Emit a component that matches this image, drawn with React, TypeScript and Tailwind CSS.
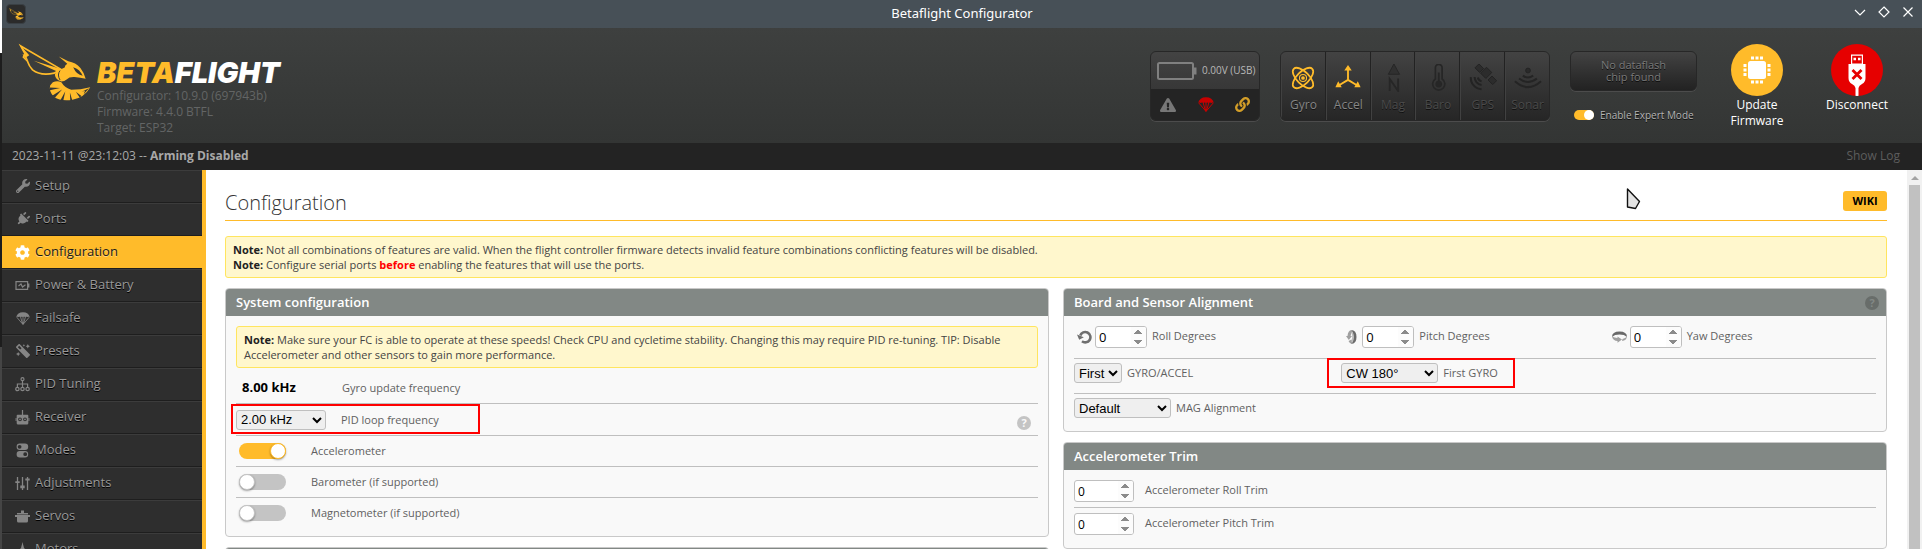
import React from "react";
import { FaWrench, FaPlug, FaCog, FaMagic, FaExclamationTriangle, FaLink } from "react-icons/fa";

const UI_FONT = "font-['Open_Sans','Noto_Sans',sans-serif]";

function Wasp({ className }: { className?: string }) {
  return (
    <svg viewBox="50 125 222 180" className={className} aria-hidden="true">
      <path
        d="M58 134 L182 206 L168 212 L160 217 Q118 226 94 207 Q84 197 78 180 L66 168 L71 158 Z"
        fill="none"
        stroke="#ffbb2a"
        strokeWidth="5"
        strokeLinejoin="miter"
      />
      <path d="M98 179 L184 205 L174 214 Z" fill="#ffbb2a" />
      <path d="M53 128 L72 160 L63 160 L82 182 L76 168 L84 162 Z" fill="#ffbb2a" />
      <path
        d="M174 166 L203 181 Q226 185 240 201 Q252 216 256 234 Q240 231 222 229 Q206 228 198 236 Q190 243 180 242 Q164 236 162 222 Q164 210 176 207 L192 200 Q192 192 200 188 Z"
        fill="#ffbb2a"
      />
      <path d="M218 199 Q238 205 247 225 Q228 222 218 199 Z" fill="#353736" />
      <path d="M178 209 Q168 222 178 238" fill="none" stroke="#3a3c3b" strokeWidth="3" />
      <path
        d="M156 245 Q170 238 182 245 Q192 262 212 268 Q240 268 270 260 Q252 292 216 298 Q182 304 160 290 Q142 272 148 254 Z"
        fill="#ffbb2a"
      />
      <g fill="#353736">
        <path d="M146 261 L178 262 L147 269Z" />
        <path d="M154 286 L184 267 L162 292Z" />
        <path d="M179 300 L194 272 L188 300Z" />
        <path d="M209 300 L208 276 L215 299Z" />
        <path d="M238 291 L226 274 L243 287Z" />
        <path d="M244 274 L266 263 L250 281 L254 271Z" />
      </g>
    </svg>
  );
}

function Parachute({ className }: { className?: string }) {
  return (
    <svg viewBox="0 0 16 15" className={className} fill="currentColor" aria-hidden="true">
      <path d="M0.2 5.8 Q1.5 0.2 8 0.2 Q14.5 0.2 15.8 5.8 Q14.6 5 13.3 5.9 Q12 5 10.6 5.9 Q9.4 5 8 5.9 Q6.6 5 5.4 5.9 Q4 5 2.7 5.9 Q1.4 5 0.2 5.8Z" />
      <path
        d="M0.8 6 L7.2 13.5 M5.2 5.8 L7.4 13.5 M10.8 5.8 L8.6 13.5 M15.2 6 L8.8 13.5 M8 5.8 V13.5"
        stroke="currentColor"
        strokeWidth="1"
        fill="none"
      />
      <path d="M6.3 12 H9.7 L8.6 14.8 H7.4 Z" />
    </svg>
  );
}

const S = { viewBox: "0 0 15 15", className: "size-[15px]", fill: "currentColor", "aria-hidden": true } as const;

const BatteryIcon = () => (
  <svg {...S}>
    <path d="M1 3.7 H12.6 V11.3 H1 Z" fill="none" stroke="currentColor" strokeWidth="1.2" />
    <rect x="13" y="5.5" width="1.4" height="4" />
    <path d="M3.5 8 L6 6 L7.5 9 L10.5 6.8" fill="none" stroke="currentColor" strokeWidth="1.2" />
  </svg>
);
const PidIcon = () => (
  <svg {...S}>
    <g fill="none" stroke="currentColor" strokeWidth="1.2">
      <circle cx="7.5" cy="2.2" r="1.5" />
      <path d="M7.5 3.8 V10 M2.4 10 V7 H12.6 V10" />
      <circle cx="2.4" cy="12" r="1.7" />
      <circle cx="7.5" cy="12" r="1.7" />
      <circle cx="12.6" cy="12" r="1.7" />
    </g>
  </svg>
);
const ReceiverIcon = () => (
  <svg {...S}>
    <rect x="6.9" y="0" width="1.2" height="6" />
    <path
      fillRule="evenodd"
      d="M2.5 4.8 H12.5 Q13.3 4.8 13.3 5.8 V13.2 Q13.3 14.4 12 14.4 H3 Q1.7 14.4 1.7 13.2 V5.8 Q1.7 4.8 2.5 4.8Z M5 7.4 A1.9 1.9 0 1 0 5 11.2 A1.9 1.9 0 1 0 5 7.4Z M10 7.4 A1.9 1.9 0 1 0 10 11.2 A1.9 1.9 0 1 0 10 7.4Z"
    />
    <circle cx="5" cy="9.3" r="0.9" />
    <circle cx="10" cy="9.3" r="0.9" />
    <rect x="0.6" y="8" width="0.9" height="3" />
    <rect x="13.5" y="8" width="0.9" height="3" />
  </svg>
);
const ModesIcon = () => (
  <svg {...S}>
    <path
      fillRule="evenodd"
      d="M4.8 0.6 H10 A3.2 3.2 0 0 1 10 7 H4.8 A3.2 3.2 0 0 1 4.8 0.6Z M4.6 1.9 A1.9 1.9 0 1 0 4.6 5.7 A1.9 1.9 0 1 0 4.6 1.9Z"
    />
    <path
      fillRule="evenodd"
      d="M4.8 8 H10 A3.2 3.2 0 0 1 10 14.4 H4.8 A3.2 3.2 0 0 1 4.8 8Z M10.2 9.3 A1.9 1.9 0 1 0 10.2 13.1 A1.9 1.9 0 1 0 10.2 9.3Z"
    />
  </svg>
);
const AdjustIcon = () => (
  <svg {...S}>
    <path d="M2.5 1 V14 M7.5 1 V14 M12.5 1 V14" stroke="currentColor" strokeWidth="1.3" />
    <path d="M0.3 5.2 H4.7 V7 H0.3Z M5.3 9.4 H9.7 V12.2 H5.3Z M10.3 2.4 H14.7 V4.4 H10.3Z" />
  </svg>
);
const ServoIcon = () => (
  <svg {...S}>
    <path d="M6 1.5 H9 V4 H6Z M2 4 H13 V5.4 H2Z M0 6 H15 V8 H13 V12 Q13 13.5 11.5 13.5 H3.5 Q2 13.5 2 12 V8 H0Z" />
  </svg>
);
const MotorIcon = () => (
  <svg {...S}>
    <path d="M7.5 0 L9 6 L15 12 L8 9.6 L0 12 L6 6Z" />
  </svg>
);

const NAV: { label: string; icon: React.ReactNode; active?: boolean }[] = [
  { label: "Setup", icon: <FaWrench className="size-[14px]" /> },
  { label: "Ports", icon: <FaPlug className="size-[14px] rotate-45" /> },
  { label: "Configuration", icon: <FaCog className="size-[15px]" />, active: true },
  { label: "Power & Battery", icon: <BatteryIcon /> },
  { label: "Failsafe", icon: <Parachute className="h-[13px] w-[14px]" /> },
  { label: "Presets", icon: <FaMagic className="size-[14px] -scale-x-100" /> },
  { label: "PID Tuning", icon: <PidIcon /> },
  { label: "Receiver", icon: <ReceiverIcon /> },
  { label: "Modes", icon: <ModesIcon /> },
  { label: "Adjustments", icon: <AdjustIcon /> },
  { label: "Servos", icon: <ServoIcon /> },
  { label: "Motors", icon: <MotorIcon /> },
];

function TitleBar() {
  return (
    <div className="grid h-7 shrink-0 grid-cols-[1fr_auto_1fr] items-center bg-[#475057] text-white">
      <span className="ml-1 flex h-5 w-5 items-center justify-center rounded-sm border border-[#3a4045] bg-[#2b2b2b]">
        <Wasp className="h-3 w-[15px]" />
      </span>
      <span className="font-['Noto_Sans',sans-serif] text-[13px] leading-[26px] self-start">Betaflight Configurator</span>
      <div className="flex items-center justify-end gap-1 pr-1 pb-1">
        <button aria-label="Minimize" className="flex size-5 items-center justify-center">
          <svg viewBox="0 0 12 12" className="size-3" fill="none" stroke="#fff" strokeWidth="1.2">
            <path d="M1 4 L6 9 L11 4" />
          </svg>
        </button>
        <button aria-label="Maximize" className="flex size-5 items-center justify-center">
          <svg viewBox="0 0 12 12" className="size-3" fill="none" stroke="#fff" strokeWidth="1.2">
            <path d="M6 1 L11 6 L6 11 L1 6Z" />
          </svg>
        </button>
        <button aria-label="Close" className="flex size-5 items-center justify-center">
          <svg viewBox="0 0 12 12" className="size-3" fill="none" stroke="#fff" strokeWidth="1.2">
            <path d="M1.5 1.5 L10.5 10.5 M10.5 1.5 L1.5 10.5" />
          </svg>
        </button>
      </div>
    </div>
  );
}

const SENSORS: { label: string; on: boolean; icon: React.ReactNode }[] = [
  {
    label: "Gyro",
    on: true,
    icon: (
      <g fill="none" stroke="#ffbb2a" strokeWidth="1.9">
        <ellipse cx="15" cy="15" rx="14" ry="6.6" transform="rotate(45 15 15)" />
        <ellipse cx="15" cy="15" rx="14" ry="6.6" transform="rotate(-45 15 15)" />
        <circle cx="15" cy="15" r="3.8" strokeWidth="1.2" />
        <circle cx="15" cy="15" r="2" fill="#ffbb2a" stroke="none" />
      </g>
    ),
  },
  {
    label: "Accel",
    on: true,
    icon: (
      <g stroke="#ffbb2a" strokeWidth="2" fill="#ffbb2a">
        <path d="M15 5 V18 M15 17 L5 23 M15 17 L25 23" fill="none" />
        <path d="M15 1 L19 7 H11Z M1.5 25 L4.5 18.5 L8.3 25Z M28.5 25 L25.5 18.5 L21.7 25Z" stroke="none" />
      </g>
    ),
  },
  {
    label: "Mag",
    on: false,
    icon: (
      <g fill="none" stroke="#262626" strokeWidth="1.6">
        <path d="M16 0 L22 11 H10Z" fill="#303030" strokeWidth="1" />
        <path d="M11.5 29 V16 L20.5 29 V15.5" strokeWidth="2" />
      </g>
    ),
  },
  {
    label: "Baro",
    on: false,
    icon: (
      <g fill="none" stroke="#262626">
        <path d="M12.2 16 V4 A3.6 3.6 0 0 1 19.4 4 V16 A6.5 6.5 0 1 1 12.2 16Z" strokeWidth="1.8" />
        <path d="M15.8 9 V20" strokeWidth="2" />
        <circle cx="15.8" cy="21.5" r="3.6" fill="#262626" stroke="none" />
      </g>
    ),
  },
  {
    label: "GPS",
    on: false,
    icon: (
      <g fill="#2c2c2c" stroke="#232323" strokeWidth="1">
        <rect x="14.4" y="5" width="8" height="9" transform="rotate(45 18.4 9.5)" />
        <rect x="8" y="1" width="6" height="7" transform="rotate(-45 11 4.5)" />
        <rect x="22" y="14" width="6" height="7" transform="rotate(-45 25 17.5)" />
        <path
          d="M2 14 A12 12 0 0 0 13.5 27 M6 14 A8.500 8.500 0 0 0 13.500 22.500 M9.5 14.500 A5 5 0 0 0 13.500 18.500"
          fill="none"
          strokeWidth="2.2"
        />
      </g>
    ),
  },
  {
    label: "Sonar",
    on: false,
    icon: (
      <g fill="none" stroke="#242424" strokeWidth="2.2">
        <circle cx="15" cy="7" r="2.6" fill="#2a2a2a" strokeWidth="1" />
        <path d="M9.5 12.500 Q15 16.500 20.5 12.500 M5.5 15.500 Q15 23 24.5 15.500 M1 18.500 Q15 31 29 18.500" />
      </g>
    ),
  },
];

function TopHeader() {
  return (
    <header className="flex h-[115px] shrink-0 items-start bg-linear-to-b from-[#3e403f] to-[#333534]">
      <div className="flex flex-1 pt-[15px] pl-4">
        <Wasp className="h-[59px] w-[73px]" />
        <div className="pt-[15px] pl-[6px]">
          <div className="font-['Inter',sans-serif] text-[29px] leading-[30px] font-black text-white italic">
            <span className="text-[#ffbb2a]">BETA</span>FLIGHT
          </div>
          <div className="text-xs leading-4 text-[#636565]">
            <p>Configurator: 10.9.0 (697943b)</p>
            <p>Firmware: 4.4.0 BTFL</p>
            <p>Target: ESP32</p>
          </div>
        </div>
      </div>

      <div className="mt-[23px] flex h-[70px] w-[110px] flex-col overflow-hidden rounded-md border border-[#272727] bg-linear-to-b from-[#434343] to-[#2e2e2e] shadow-[0_1px_0_#4c4c4c]">
        <div className="flex h-[37px] items-center gap-[5px] pl-[6px]">
          <svg viewBox="0 0 40 18" className="h-[18px] w-10 shrink-0" aria-hidden="true">
            <rect x="1" y="1" width="35" height="16" rx="1.5" fill="none" stroke="#808080" strokeWidth="2" />
            <rect x="36.5" y="5.5" width="3" height="7" fill="#808080" />
          </svg>
          <span className="text-[10px] whitespace-nowrap text-[#b8b8b8]">0.00V (USB)</span>
        </div>
        <div className="flex flex-1 items-center justify-between bg-[#242424] px-[9px]">
          <FaExclamationTriangle className="size-4 text-[#777]" />
          <Parachute className="h-[15px] w-4 text-[#c80000]" />
          <FaLink className="size-[15px] text-[#d39e28]" />
        </div>
      </div>

      <ul className="mt-[23px] ml-5 flex h-[70px] w-[270px] overflow-hidden rounded-md border border-[#272727] bg-linear-to-b from-[#434343] to-[#262626] shadow-[0_1px_0_#4c4c4c]">
        {SENSORS.map((s) => (
          <li
            key={s.label}
            className="flex w-0 flex-1 flex-col items-center border-r border-l border-r-[#222] border-l-[#414141] pt-3 last:border-r-0"
          >
            <svg viewBox="0 0 30 30" className="size-7" aria-hidden="true">
              {s.icon}
            </svg>
            <span
              className={
                s.on
                  ? "mt-[5px] text-xs leading-4 text-[#868686] [text-shadow:0_1px_rgba(0,0,0,0.6)]"
                  : "mt-[5px] text-xs leading-4 text-[#4a4a4a] [text-shadow:0_1px_rgba(0,0,0,0.6)]"
              }
            >
              {s.label}
            </span>
          </li>
        ))}
      </ul>

      <div className="mt-[23px] ml-5 flex w-[127px] flex-col">
        <div className="flex h-10 flex-col items-center justify-center rounded-md border border-[#272727] bg-linear-to-b from-[#434343] to-[#222] text-center text-[11px] leading-3 text-[#7a7a7a] shadow-[0_1px_0_#4c4c4c] [text-shadow:0_1px_rgba(0,0,0,0.8)]">
          <span>No dataflash</span>
          <span>chip found</span>
        </div>
        <label className="mt-4 flex items-center gap-[6px] pl-1 text-[10px] leading-4 whitespace-nowrap text-[#b4b4b4] [text-shadow:0_1px_rgba(0,0,0,0.8)]">
          <input
            type="checkbox"
            defaultChecked
            className="flex h-[10px] w-5 shrink-0 appearance-none rounded-full bg-[#c4c4c4] before:block before:size-[10px] before:rounded-full before:bg-white checked:bg-[#ffbb2a] checked:before:ml-auto"
          />
          Enable Expert Mode
        </label>
      </div>

      <button className="mt-4 ml-[10px] flex w-[100px] flex-col items-center text-xs leading-4 text-white">
        <span className="flex size-[52px] items-center justify-center rounded-full bg-[#ffbb2a]">
          <svg viewBox="0 0 28 28" className="size-7" fill="#fff" aria-hidden="true">
            <rect x="5" y="5" width="18" height="18" rx="2.5" />
            <path d="M8 0.5h3v3H8z M12.5 0.5h3v3h-3z M17 0.5h3v3h-3z M8 24.5h3v3H8z M12.5 24.5h3v3h-3z M17 24.5h3v3h-3z M0.5 8v3h3V8z M0.5 12.5v3h3v-3z M0.5 17v3h3v-3z M24.5 8v3h3V8z M24.5 12.5v3h3v-3z M24.5 17v3h3v-3z" />
          </svg>
        </span>
        <span className="mt-px">Update</span>
        <span>Firmware</span>
      </button>
      <button className="mt-4 mr-[15px] flex w-[100px] flex-col items-center text-xs leading-4 text-white">
        <span className="flex size-[52px] items-end justify-center overflow-hidden rounded-full bg-[#e60000]">
          <svg viewBox="0 0 20 42" className="h-[42px] w-5" aria-hidden="true">
            <path
              fill="#fff"
              fillRule="evenodd"
              d="M4 0.5 H16 V10 H18.5 V24 Q18.5 28 15 30 Q12 31.5 11.5 34 V42 H8.5 V34 Q8 31.5 5 30 Q1.5 28 1.5 24 V10 H4Z M5.2 1.8 V9.5 H14.8 V1.8Z"
            />
            <path fill="#fff" d="M6.5 3.8h2.5v2.5H6.5z M11 3.8h2.5v2.5H11z" />
            <path d="M5.5 16 L14.5 25 M14.5 16 L5.5 25" stroke="#e60000" strokeWidth="2.8" />
          </svg>
        </span>
        <span className="mt-px">Disconnect</span>
      </button>
    </header>
  );
}

function HelpIcon({ className }: { className: string }) {
  return (
    <button
      aria-label="Help"
      className={`flex size-[14px] items-center justify-center rounded-full text-[11px] leading-[14px] font-bold ${className}`}
    >
      ?
    </button>
  );
}

function Panel({ title, help, children }: { title: string; help?: boolean; children: React.ReactNode }) {
  return (
    <section className="overflow-hidden rounded-[4px] border border-[#c9c9c9] bg-[#f9f9f9]">
      <header className="flex h-[27px] items-center justify-between bg-[#828885] pr-[7px] pl-[10px]">
        <h2 className="text-[13px] font-semibold text-white">{title}</h2>
        {help && <HelpIcon className="bg-[#686d6a] text-[#828885]" />}
      </header>
      {children}
    </section>
  );
}

function Note({ children }: { children: React.ReactNode }) {
  return (
    <div className="rounded-[3px] border border-[#ffe55f] bg-[#fff7cd] px-[7px] py-[5px] text-[11px] leading-[15px] text-[#444]">
      {children}
    </div>
  );
}

const SELECT =
  "h-5 rounded-[3px] border border-[#bfbfbf] bg-[#efefef] font-['Liberation_Sans',sans-serif] text-[13px] text-black";

function NumberField({ id, wide }: { id: string; wide?: boolean }) {
  return (
    <input
      id={id}
      type="number"
      defaultValue={0}
      className={`${wide ? "w-[60px] text-[12px]" : "w-[52px] text-[13px]"} h-[22px] rounded-[3px] border border-[#bfbfbf] bg-white pl-[3px] text-black [&::-webkit-inner-spin-button]:h-5 [&::-webkit-inner-spin-button]:opacity-100`}
    />
  );
}

const FIELD_LABEL = "text-[11px] leading-5 text-[#616161]";

function AxisField({ id, label, icon }: { id: string; label: string; icon: React.ReactNode }) {
  return (
    <div className="flex items-start">
      <span className="flex h-[22px] w-[21px] shrink-0 items-center justify-end pr-[3px]">{icon}</span>
      <NumberField id={id} />
      <label htmlFor={id} className={`${FIELD_LABEL} pl-[5px]`}>
        {label}
      </label>
    </div>
  );
}

function SensorToggle({ label, on, last }: { label: string; on?: boolean; last?: boolean }) {
  return (
    <label
      className={`flex items-center gap-[25px] pl-[3px] text-[11px] text-[#616161] ${last ? "h-[30px]" : "h-[31px] border-b border-[#bfbfbf]"}`}
    >
      <input
        type="checkbox"
        defaultChecked={on}
        className="flex h-4 w-[47px] appearance-none rounded-full bg-[#c4c4c4] before:block before:size-4 before:rounded-full before:border before:border-[#c4c4c4] before:bg-white before:shadow-[0_1px_2px_rgba(0,0,0,0.35)] checked:bg-[#ffbb2a] checked:before:ml-auto checked:before:border-[#ffbb2a]"
      />
      {label}
    </label>
  );
}

const RollIcon = () => (
  <svg viewBox="0 0 15 14" className="h-[14px] w-[15px] shrink-0" fill="none" aria-hidden="true">
    <path d="M3.3 5.5 A5.2 5.2 0 1 1 5 11.300" stroke="#6f6f6f" strokeWidth="2.6" />
    <path d="M0 4.500 L6.8 7.2 L2.2 9.800Z" fill="#6f6f6f" />
  </svg>
);
const PitchIcon = () => (
  <svg viewBox="0 0 15 14" className="h-[14px] w-[15px] shrink-0" aria-hidden="true">
    <path d="M7 0 Q12.5 0 12.500 7 Q12.5 14 7 14 Q9.6 11.500 9.600 7 Q9.6 2.500 7 0Z" fill="#6a6a6a" />
    <path d="M7.500 0 Q4 0.500 3.500 6 L2 6 L4.800 10 L8 6 L6.600 6 Q6.800 3 8.500 1.500Z M4.500 11 L7.500 9.500 L9 13.800 Q6 14.500 4.500 11Z" fill="#a0a0a0" />
    <path d="M8 2 Q10 7 8 12" stroke="#bdbdbd" strokeWidth="1.600" fill="none" />
  </svg>
);
const YawIcon = () => (
  <svg viewBox="0 0 15 14" className="h-[14px] w-[15px] shrink-0" aria-hidden="true">
    <path d="M0 7 Q0 1.500 7.500 1.500 Q15 1.500 15 7 Q12.500 4.600 7.500 4.600 Q2.500 4.600 0 7Z" fill="#6a6a6a" />
    <path d="M0 6.500 Q1 10.800 5.500 11 L5.500 12.800 L10 9.600 L5.500 6.600 L5.500 8 Q2.500 7.800 0 6.500Z M10.500 9 Q13.500 8 15 6.500 Q14.500 10.500 10 11Z" fill="#a0a0a0" />
  </svg>
);

export default function App() {
  return (
    <div className={`flex h-screen overflow-hidden bg-white ${UI_FONT}`}>
      <div className="flex w-[2px] shrink-0 flex-col">
        <div className="h-[53px] bg-white" />
        <div className="h-[294px] bg-[#1d1d1d]" />
        <div className="flex-1 bg-[#454545]" />
      </div>
      <div className="flex min-w-0 flex-1 flex-col">
        <TitleBar />
        <TopHeader />
        <div className="flex h-[27px] shrink-0 items-center justify-between bg-[#232323] pr-[22px] pl-[10px] text-xs text-[#a8a8a8]">
          <p className="-mt-px">
            2023-11-11 @23:12:03 -- <strong className="font-bold">Arming Disabled</strong>
          </p>
          <button className="-mt-px text-[#5d5d5d]">Show Log</button>
        </div>

        <div className="flex min-h-0 flex-1">
          <nav className="w-[204px] shrink-0 overflow-hidden border-r-4 border-[#ffbb2a] bg-[#2e2e2e]">
            <ul>
              {NAV.map((n) => (
                <li key={n.label}>
                  <a
                    href="#"
                    aria-current={n.active ? "page" : undefined}
                    className={
                      n.active
                        ? "flex h-[33px] items-center gap-[5px] border-b border-[#1e1e1e] bg-[#ffbb2a] pl-[13px] text-[13px] text-[#1a1a1a] [text-shadow:0_1px_rgba(255,255,255,0.4)]"
                        : "flex h-[33px] items-center gap-[5px] border-b border-[#1e1e1e] pl-[13px] text-[13px] text-[#999] shadow-[inset_0_1px_0_#3c3c3c] [text-shadow:0_1px_rgba(0,0,0,1)]"
                    }
                  >
                    <span
                      className={
                        n.active
                          ? "flex w-[15px] justify-center text-white"
                          : "flex w-[15px] justify-center text-[#858585]"
                      }
                    >
                      {n.icon}
                    </span>
                    {n.label}
                  </a>
                </li>
              ))}
            </ul>
          </nav>

          <main className="min-w-0 flex-1 overflow-hidden pt-5 pr-5 pl-[19px]">
            <div className="mb-[15px] flex h-[31px] items-start justify-between border-b border-[#ffbb2a]">
              <h1 className="text-[20px] leading-[25px] font-light text-[#333]">Configuration</h1>
              <a
                href="#"
                className="mt-px flex h-5 w-11 items-center justify-center rounded-[3px] bg-[#ffbb2a] text-[11px] font-bold text-black"
              >
                WIKI
              </a>
            </div>
            <Note>
              <p>
                <b className="text-[#222]">Note:</b> Not all combinations of features are valid. When the flight
                controller firmware detects invalid feature combinations conflicting features will be disabled.
              </p>
              <p>
                <b className="text-[#222]">Note:</b> Configure serial ports <b className="text-[#f00]">before</b>{" "}
                enabling the features that will use the ports.
              </p>
            </Note>

            <div className="mt-[10px] grid grid-cols-2 items-start gap-[14px]">
              <div className="flex flex-col gap-[10px]">
                <Panel title="System configuration">
                  <div className="px-[10px] pt-[10px] pb-2">
                    <Note>
                      <p>
                        <b className="text-[#222]">Note:</b> Make sure your FC is able to operate at these speeds! Check
                        CPU and cycletime stability. Changing this may require PID re-tuning. TIP: Disable
                        Accelerometer and other sensors to gain more performance.
                      </p>
                    </Note>
                    <div className="mt-[5px] flex h-[31px] items-center border-b border-[#bfbfbf]">
                      <output id="gyro-rate" className="w-[106px] pl-[6px] text-[13px] font-bold text-black">
                        8.00 kHz
                      </output>
                      <label htmlFor="gyro-rate" className={FIELD_LABEL}>
                        Gyro update frequency
                      </label>
                    </div>
                    <div className="relative flex h-8 items-center gap-[15px] border-b border-[#bfbfbf]">
                      <select id="pid-rate" className={`${SELECT} w-[90px]`}>
                        <option>2.00 kHz</option>
                      </select>
                      <label htmlFor="pid-rate" className={FIELD_LABEL}>
                        PID loop frequency
                      </label>
                      <HelpIcon className="mt-[7px] mr-[7px] ml-auto bg-[#c4c4c4] text-[#f9f9f9]" />
                      <div className="pointer-events-none absolute top-0 -left-[5px] h-[30px] w-[249px] border-2 border-[#f00]" />
                    </div>
                    <SensorToggle label="Accelerometer" on />
                    <SensorToggle label="Barometer (if supported)" />
                    <SensorToggle label="Magnetometer (if supported)" last />
                  </div>
                </Panel>
                <section className="h-10 rounded-[4px] border border-[#c9c9c9] bg-[#828885]" />
              </div>

              <div className="flex flex-col gap-[10px]">
                <Panel title="Board and Sensor Alignment" help>
                  <div className="p-[10px]">
                    <div className="grid h-[33px] grid-cols-3 border-b border-[#bfbfbf]">
                      <AxisField id="roll" label="Roll Degrees" icon={<RollIcon />} />
                      <AxisField id="pitch" label="Pitch Degrees" icon={<PitchIcon />} />
                      <AxisField id="yaw" label="Yaw Degrees" icon={<YawIcon />} />
                    </div>
                    <div className="grid h-[35px] grid-cols-3 border-b border-[#bfbfbf] pt-1">
                      <div className="flex h-5 items-center gap-[5px]">
                        <select id="gyro-accel" className={`${SELECT} w-12`}>
                          <option>First</option>
                        </select>
                        <label htmlFor="gyro-accel" className={FIELD_LABEL}>
                          GYRO/ACCEL
                        </label>
                      </div>
                      <div className="relative flex h-5 items-center gap-[5px]">
                        <select id="first-gyro" className={`${SELECT} w-[97px]`}>
                          <option>CW 180°</option>
                        </select>
                        <label htmlFor="first-gyro" className={FIELD_LABEL}>
                          First GYRO
                        </label>
                        <div className="pointer-events-none absolute -top-[5px] -left-[14px] h-[30px] w-[188px] border-2 border-[#f00]" />
                      </div>
                    </div>
                    <div className="flex h-[27px] items-start pt-1">
                      <div className="flex h-5 items-center gap-[5px]">
                        <select id="mag-align" className={`${SELECT} w-[97px]`}>
                          <option>Default</option>
                        </select>
                        <label htmlFor="mag-align" className={FIELD_LABEL}>
                          MAG Alignment
                        </label>
                      </div>
                    </div>
                  </div>
                </Panel>
                <Panel title="Accelerometer Trim">
                  <div className="p-[10px]">
                    <div className="flex h-7 items-start gap-[11px] border-b border-[#bfbfbf]">
                      <NumberField id="roll-trim" wide />
                      <label htmlFor="roll-trim" className={FIELD_LABEL}>
                        Accelerometer Roll Trim
                      </label>
                    </div>
                    <div className="flex h-[30px] items-start gap-[11px] pt-[5px]">
                      <NumberField id="pitch-trim" wide />
                      <label htmlFor="pitch-trim" className={FIELD_LABEL}>
                        Accelerometer Pitch Trim
                      </label>
                    </div>
                  </div>
                </Panel>
              </div>
            </div>
          </main>

          <div className="flex w-[15px] shrink-0 flex-col items-center bg-[#f1f1f1]" aria-hidden="true">
            <div className="flex h-[15px] items-center">
              <svg viewBox="0 0 8 4" className="h-1 w-2" fill="#a3a3a3">
                <path d="M0 4 L4 0 L8 4Z" />
              </svg>
            </div>
            <div className="w-[11px] flex-1 bg-[#c1c1c1]" />
          </div>
        </div>
      </div>

      <svg
        viewBox="0 0 15 24"
        className="pointer-events-none absolute top-[187px] right-[281px] h-6 w-[15px]"
        aria-hidden="true"
      >
        <path d="M1.5 2 V20 L9.5 21.5 L13.5 14.5Z" fill="#e4e4e4" stroke="#111" strokeWidth="1.4" strokeLinejoin="round" />
      </svg>
    </div>
  );
}
